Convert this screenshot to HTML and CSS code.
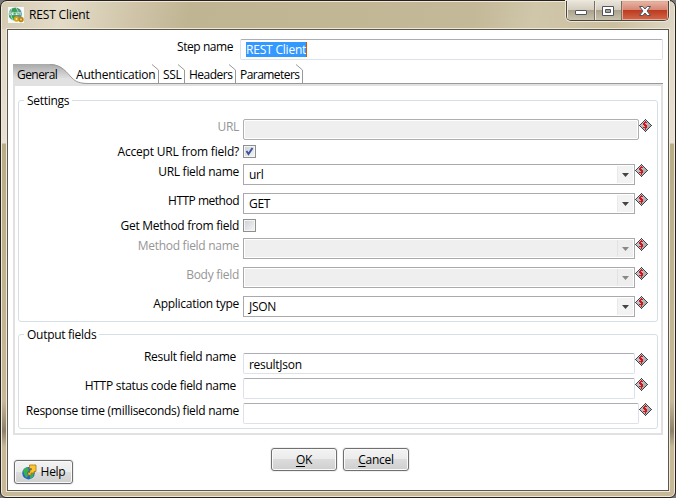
FILE: index.html
```
<!DOCTYPE html>
<html lang="en">
<head>
<meta charset="utf-8">
<title>REST Client</title>
<link rel="stylesheet" href="styles.css">
</head>
<body>
<svg width="0" height="0" class="defs">
  <defs>
    <linearGradient id="tabfill" x1="0" y1="0" x2="0" y2="1"><stop offset="0" stop-color="#a9a9a9"/><stop offset=".75" stop-color="#e1e1e1"/></linearGradient>
    <linearGradient id="diafill" x1="0" y1="0" x2="1" y2="1"><stop offset="0" stop-color="#d4d6d8"/><stop offset="1" stop-color="#999"/></linearGradient>
    <symbol id="dollar" viewBox="0 0 13 13">
      <path d="M6.5 .5 12.5 6.5 6.5 12.5 .5 6.5Z" fill="url(#diafill)"/>
      <path shape-rendering="crispEdges" d="M6 0h1v1H6zM5 1h1v1H5zM7 1h1v1H7zM4 2h1v1H4zM8 2h1v1H8zM3 3h1v1H3zM9 3h1v1H9zM2 4h1v1H2zM10 4h1v1h-1zM1 5h1v1H1zM11 5h1v1h-1zM0 6h1v1H0zM12 6h1v1h-1zM1 7h1v1H1zM11 7h1v1h-1zM2 8h1v1H2zM10 8h1v1h-1zM3 9h1v1H3zM9 9h1v1H9zM4 10h1v1H4zM8 10h1v1H8zM5 11h1v1H5zM7 11h1v1H7zM6 12h1v1H6z" fill="#3d464d"/>
      <path shape-rendering="crispEdges" d="M6 2h1v1h1v1H6v1h1v1h1v3H7v2H6V9H4V8h2V7H5V6H4V4h1V3h1z" fill="#d3141b"/>
    </symbol>
    <symbol id="arrow" viewBox="0 0 7 4"><path d="M0 0h7L3.5 4Z" fill="currentColor"/></symbol>
  </defs>
</svg>
<div class="window">
  <header class="titlebar">
    <svg class="appicon" width="16" height="16" viewBox="0 0 16 16">
      <path d="M0 0h16v16H0z" fill="#f7f8fa"/>
      <circle cx="7.3" cy="7" r="6.6" fill="#5b91a0"/>
      <path d="M2 3Q7-1 12 3L9 4H2ZM1 9h7l-2 4Q2 12 1 9Z" fill="#31a344"/>
      <path d="M1 5h12v3H1z" fill="#d8f0df"/>
      <path d="M2 8V5h2v1H2l2 2m4-3H6v3h2M6 6.5h2m3-1.500H9v1.500h2V8H9M12 5v3" fill="none" stroke="#2e9b45" stroke-width=".7"/>
      <path d="M4 .7Q1 7 5 13M8 .5Q11 4 10 8" fill="none" stroke="#dceff4" stroke-width=".7"/>
      <circle cx="8.500" cy="12" r="2.700" fill="#d6a11c"/><circle cx="13" cy="12.500" r="2.700" fill="#bd850e"/>
      <circle cx="8.500" cy="12" r=".9" fill="#fff0a0"/><circle cx="13" cy="12.500" r=".9" fill="#f4d470"/>
    </svg>
    <h1>REST Client</h1>
    <div class="controls">
      <span class="min"><svg width="12" height="5"><rect x=".5" y=".5" width="11" height="4" rx=".5" fill="#fff" stroke="#50545e"/></svg></span>
      <span class="max"><svg width="12" height="10"><path d="M.5.5h11v9H.5ZM3.500 3.500v3h5v-3Z" fill="#fff" fill-rule="evenodd" stroke="#50545e"/></svg></span>
      <span class="close"><svg width="12" height="10"><path d="M.5.5h3.300L6 3 8.200.5h3.300L8 5l3.500 4.500H8.200L6 7 3.800 9.500H.5L4 5Z" fill="#fff" stroke="#50545e"/></svg></span>
    </div>
  </header>
  <main class="client">
    <div class="step"><span class="steplabel">Step name</span><div class="input stepinput"><span class="sel">REST Client</span></div></div>
    <nav class="tabs">
      <div class="tab active"><svg width="76" height="20"><path d="M0 0H37C49 0 54 9 59 14C63 18 67 19.500 76 19.500V20H0Z" fill="url(#tabfill)"/><path d="M37 .5C49 .5 54 9 59 14C63 18 67 19.500 76 19.500" fill="none" stroke="#999"/></svg><span>General</span></div>
      <div class="tab t2"><span>Authentication</span><svg width="7" height="19"><path d="M0 .5L6.500 6v13" fill="none" stroke="#999"/></svg></div>
      <div class="tab t3"><span>SSL</span><svg width="7" height="19"><path d="M0 .5L6.500 6v13" fill="none" stroke="#999"/></svg></div>
      <div class="tab t4"><span>Headers</span><svg width="7" height="19"><path d="M0 .5L6.500 6v13" fill="none" stroke="#999"/></svg></div>
      <div class="tab t5"><span>Parameters</span><svg width="7" height="19"><path d="M0 .5L6.500 6v13" fill="none" stroke="#999"/></svg></div>
    </nav>
    <section class="panel">
      <div class="group settings">
        <h2>Settings</h2>
        <div class="row h26 off"><label>URL</label><div class="input wide disabled"></div><svg class="var"><use href="#dollar"/></svg></div>
        <div class="row h19 check accept"><label>Accept URL from field?</label><div class="box"><svg width="9" height="9"><path d="M1.500 4 3.500 7 7.500 1" fill="none" stroke="#3c529b" stroke-width="1.900"/></svg></div></div>
        <div class="row h29"><label>URL field name</label><div class="combo"><span>url</span><i><svg width="7" height="4"><use href="#arrow"/></svg></i></div><svg class="var"><use href="#dollar"/></svg></div>
        <div class="row h26 method"><label>HTTP method</label><div class="combo"><span>GET</span><i><svg width="7" height="4"><use href="#arrow"/></svg></i></div><svg class="var"><use href="#dollar"/></svg></div>
        <div class="row h19 check"><label>Get Method from field</label><div class="box"></div></div>
        <div class="row h29 off"><label>Method field name</label><div class="combo disabled"><span></span><i><svg width="7" height="4"><use href="#arrow"/></svg></i></div><svg class="var"><use href="#dollar"/></svg></div>
        <div class="row h29 off"><label>Body field</label><div class="combo disabled"><span></span><i><svg width="7" height="4"><use href="#arrow"/></svg></i></div><svg class="var"><use href="#dollar"/></svg></div>
        <div class="row h21"><label>Application type</label><div class="combo"><span>JSON</span><i><svg width="7" height="4"><use href="#arrow"/></svg></i></div><svg class="var"><use href="#dollar"/></svg></div>
      </div>
      <div class="group output">
        <h2>Output fields</h2>
        <div class="row h25 inset"><label>Result field name</label><div class="input"><span>resultJson</span></div><svg class="var"><use href="#dollar"/></svg></div>
        <div class="row h25 inset"><label>HTTP status code field name</label><div class="input"></div><svg class="var"><use href="#dollar"/></svg></div>
        <div class="row h21"><label>Response time (milliseconds) field name</label><div class="input wide"></div><svg class="var"><use href="#dollar"/></svg></div>
      </div>
    </section>
    <footer class="actions">
      <button class="help"><svg width="15" height="16" viewBox="0 0 15 16"><circle cx="6.500" cy="9.200" r="6.200" fill="#2864c8"/><path d="M1 6 5 3l2 3-2 3 1 3-2 2-2-4ZM8 8l4 1-1 4-3 2Z" fill="#36b34a"/><path d="M7.500 1h6.500v6.500h-2V9H9v2H6V8.500h2V6h1.500V4.500h-2Z" fill="#ffc629" stroke="#a87714" stroke-width=".8"/></svg><span>Help</span></button>
      <button class="ok"><span><u>O</u>K</span></button>
      <button class="cancel"><span><u>C</u>ancel</span></button>
    </footer>
  </main>
</div>
</body>
</html>
```
FILE: styles.css
```
* { box-sizing: border-box; }
body { margin: 0; width: 676px; height: 498px; overflow: hidden; background: #777; font: 12px/16px "Open Sans", "Noto Sans", sans-serif; letter-spacing: -.28px; color: #000; }
svg { display: block; flex: none; }
.defs { position: absolute; }
h1, h2 { margin: 0; font-size: 12px; font-weight: 400; }
.window { width: 676px; height: 498px; border: 1px solid #27211e; border-radius: 7px 7px 6px 6px; padding: 0 5px 6px; box-shadow: inset 0 0 0 1px #efe9db; background: linear-gradient(to bottom, #ddd4c0 0, #e9e0d5 142px, #b9ad88 143px, #c7b998 400px, #8d8069 430px, #c7b998 446px); display: flex; flex-direction: column; }
.titlebar { height: 27px; margin: 1px -4px 0; padding: 4px 5px 0 6px; display: flex; align-items: flex-start; background: linear-gradient(100deg, #d4cbb3 0, #e4dcc8 9%, #cfc4a8 20%, #bfb592 28%, #c3b998 70%, #d0c6aa 79%, #cbbf9f 91%, #ddd6c3 100%); border-radius: 5px 5px 0 0; }
.appicon { margin-top: 1px; }
h1 { margin: 1px 0 0 5px; flex: 1; letter-spacing: -.16px; }
.controls { display: flex; width: 103px; height: 20px; margin-top: -5px; border: 1px solid #49443d; border-top: 0; border-radius: 0 0 5px 5px; overflow: hidden; box-shadow: 0 0 0 1px #eee8d9; }
.controls span { display: flex; align-items: center; justify-content: center; border-right: 1px solid #777165; background: linear-gradient(#e9e5dc 0, #d3ccbd 48%, #aaa28b 50%, #c8c2ae 100%); box-shadow: inset 1px 0 #eee9df; }
.controls .min { width: 28px; padding-top: 4px; }
.controls .max { width: 27px; }
.controls .close { flex: 1; border: 0; background: linear-gradient(#e8b5a6 0, #d58672 48%, #bd3b20 50%, #d2694a 100%); box-shadow: inset 0 0 0 1px #e5a797; }
.client { flex: 1; width: 662px; align-self: center; border: 1px solid #5d584e; outline: 1px solid #eee8d9; background: #fff; padding: 9px 5px 0; }
.step { display: flex; height: 25px; }
.steplabel { width: 227px; padding-right: 7px; text-align: right; letter-spacing: -.45px; }
.input { height: 21px; width: 392px; border: 1px solid #dde1e9; border-top-color: #abadb3; border-left-color: #dde1e9; border-radius: 2px; padding: 3px 5px 0; background: #fff; line-height: 15px; }
.input.stepinput { flex: 1; padding-top: 2px; }
.sel { display: inline-block; height: 15px; line-height: 16px; color: #fff; background: #3399ff; border-right: 1px solid #c65b00; letter-spacing: -.2px; }
.tabs { display: flex; height: 20px; border-bottom: 1px solid #999; }
.tab { display: grid; height: 20px; position: relative; }
.tab > * { grid-area: 1 / 1; }
.tab > svg { justify-self: end; }
.tab span { padding: 3px 0 0 4px; white-space: nowrap; }
.active { width: 59px; }
.active svg { justify-self: start; }
.active span { letter-spacing: -.55px; }
.t2 { width: 87px; }
.t2 span { letter-spacing: -.2px; }
.t3 { width: 26px; }
.t4 { width: 51px; }
.t4 span { letter-spacing: -.5px; }
.t5 { width: 67px; }
.t5 span { letter-spacing: -.55px; }
.panel { width: 650px; height: 351px; border: 2px solid #e1e1e1; padding: 14px 3px 0; }
.group { position: relative; width: 640px; border: 1px solid #d5dfe5; border-radius: 3px; }
.group h2 { position: absolute; top: -8px; left: 5px; padding: 0 3px; background: #fff; line-height: 16px; }
.settings { height: 222px; padding-top: 18px; margin-bottom: 12px; }
.output { height: 95px; padding-top: 18px; }
.row { display: flex; align-items: flex-start; }
.row label { width: 224px; padding-right: 4px; text-align: right; white-space: nowrap; }
.row.inset label { padding-right: 7px; }
.output .row:nth-child(2) label { margin-top: -4px; }
.check label { margin-top: -1px; }
.accept label { letter-spacing: -.2px; }
.method label { letter-spacing: -.5px; }
.h19 { height: 19px; } .h21 { height: 21px; } .h25 { height: 25px; } .h26 { height: 26px; } .h29 { height: 29px; }
.off label { color: #969696; }
.input.wide { width: 396px; }
.input.disabled { background: #efefef; border: 1px solid #afafaf; box-shadow: inset 0 0 0 1px #fff; }
.var { width: 13px; height: 13px; }
.box { width: 13px; height: 13px; border: 1px solid #8e8f8f; background: linear-gradient(135deg, #cbcfd5, #f6f6f6); box-shadow: inset 0 0 0 1px #f4f4f4; padding: 1px; }
.combo { width: 392px; height: 21px; border: 1px solid #a9a9ae; display: flex; padding: 1px; background: #fff; }
.combo span { flex: 1; padding: 1px 0 0 4px; }
.combo i { width: 16px; height: 17px; background: linear-gradient(90deg, #e9e9e9 1px, #f3f3f3 1px, #f3f3f3); border-radius: 1px; padding: 7px 0 0 5px; color: #444; }
.combo.disabled { background: #efefef; box-shadow: inset 0 0 0 1px #fff; }
.combo.disabled i { color: #888; background: #eee; border-left: 1px solid #e2e2e2; padding-left: 4px; }
.actions { display: flex; padding-top: 13px; }
button { font: inherit; letter-spacing: inherit; color: inherit; padding: 0; display: flex; align-items: center; justify-content: center; width: 66px; height: 23px; border: 1px solid #707070; border-radius: 3px; background: linear-gradient(#f3f3f3 0, #ebebeb 48%, #dcdcdc 50%, #cfcfcf 100%); box-shadow: inset 0 0 0 1px #fafafa, 0 0 0 1px #f0f0f0; }
button.help { width: 59px; height: 24px; margin: 12px 198px 0 1px; gap: 4px; }
.ok { margin-right: 6px; }
u { text-underline-offset: 2px; text-decoration-thickness: 1px; }
```
